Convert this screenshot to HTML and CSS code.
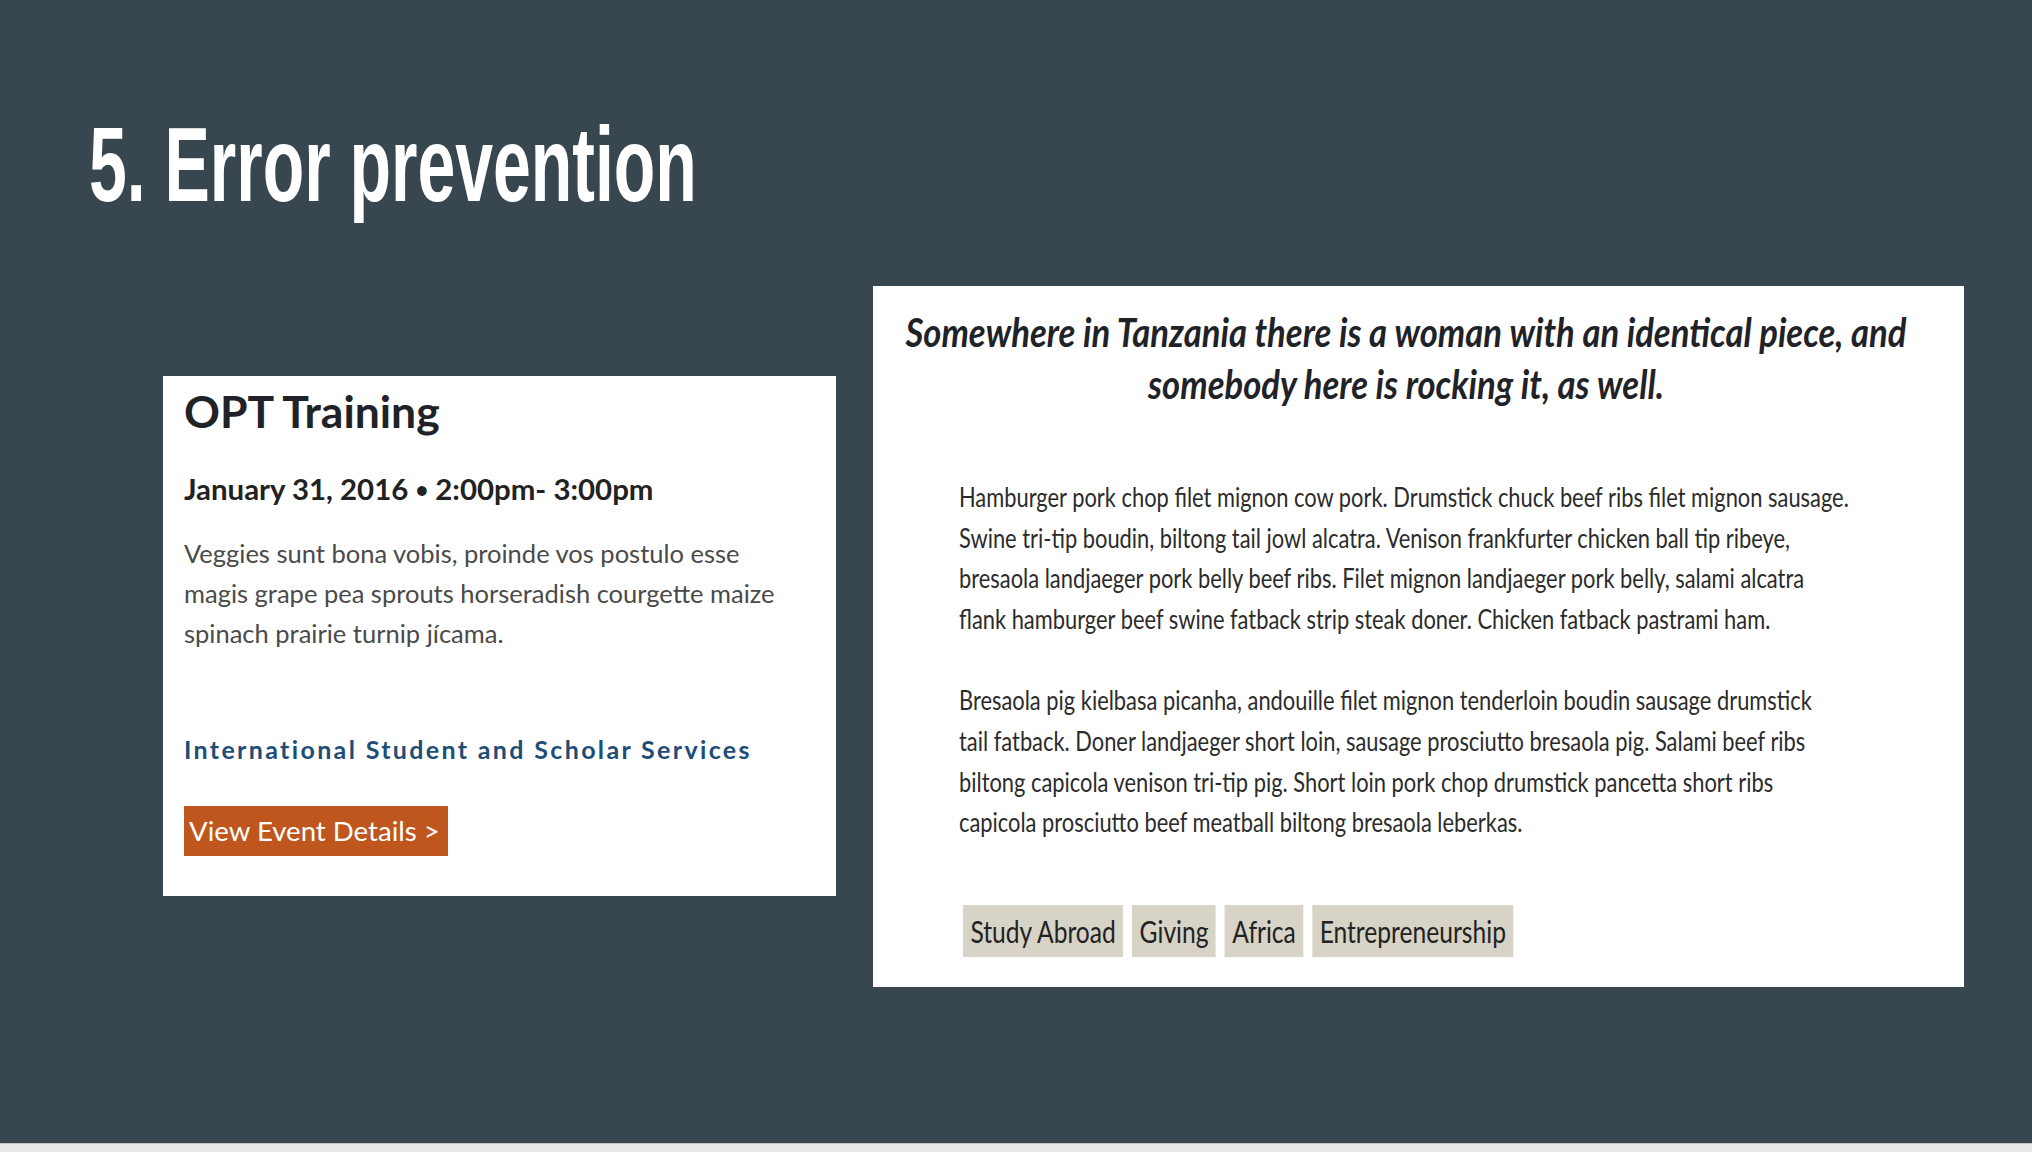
FILE: index.html
```html
<!DOCTYPE html>
<html lang="en">
<head>
<meta charset="utf-8">
<title>5. Error prevention</title>
<link rel="stylesheet" href="styles.css">
</head>
<body>
<div class="slide">
  <h1 class="slide-title"><span class="slide-title-text">5. Error prevention</span></h1>
  <div class="cards">
    <div class="event-card">
      <h2 class="event-title">OPT Training</h2>
      <div class="event-date">January 31, 2016 <span class="event-dot">•</span> 2:00pm- 3:00pm</div>
      <p class="event-desc">Veggies sunt bona vobis, proinde vos postulo esse<br>magis grape pea sprouts horseradish courgette maize<br>spinach prairie turnip jícama.</p>
      <div class="event-org">International Student and Scholar Services</div>
      <a class="event-btn">View Event Details &gt;</a>
    </div>
    <div class="story-card">
      <p class="story-quote">Somewhere in Tanzania there is a woman with an identical piece, and<br>somebody here is rocking it, as well.</p>
      <p class="story-text">Hamburger pork chop filet mignon cow pork. Drumstick chuck beef ribs filet mignon sausage.<br>Swine tri-tip boudin, biltong tail jowl alcatra. Venison frankfurter chicken ball tip ribeye,<br>bresaola landjaeger pork belly beef ribs. Filet mignon landjaeger pork belly, salami alcatra<br>flank hamburger beef swine fatback strip steak doner. Chicken fatback pastrami ham.</p>
      <p class="story-text story-text-2">Bresaola pig kielbasa picanha, andouille filet mignon tenderloin boudin sausage drumstick<br>tail fatback. Doner landjaeger short loin, sausage prosciutto bresaola pig. Salami beef ribs<br>biltong capicola venison tri-tip pig. Short loin pork chop drumstick pancetta short ribs<br>capicola prosciutto beef meatball biltong bresaola leberkas.</p>
      <div class="tags">
        <span class="tag">Study Abroad</span>
        <span class="tag">Giving</span>
        <span class="tag">Africa</span>
        <span class="tag">Entrepreneurship</span>
      </div>
    </div>
  </div>
</div>
<div class="bottom-strip"></div>
</body>
</html>
```

FILE: styles.css
```css
html, body {
  margin: 0;
  padding: 0;
  background: #e8e8e8;
}
.slide {
  height: 1143px;
  background: #384650;
  box-sizing: border-box;
  padding-top: 105px;
  overflow: hidden;
}
.slide-title {
  margin: 0 0 0 89px;
  font-family: "Liberation Sans", sans-serif;
  font-weight: 700;
  font-size: 105px;
  line-height: 120px;
  color: #ffffff;
  white-space: nowrap;
}
.slide-title-text {
  display: inline-block;
  transform: scaleX(0.647);
  transform-origin: left center;
}
.cards {
  display: flex;
  align-items: flex-start;
  gap: 37px;
  margin-left: 163px;
  margin-top: 61px;
}
.event-card {
  background: #ffffff;
  width: 673px;
  height: 520px;
  box-sizing: border-box;
  margin-top: 90px;
  padding: 10px 0 0 21px;
  font-family: "Lato", "Liberation Sans", sans-serif;
  display: flex;
  flex-direction: column;
  align-items: flex-start;
}
.event-title {
  margin: 0;
  font-size: 44.5px;
  line-height: 50px;
  font-weight: 700;
  color: #1f2328;
}
.event-date {
  margin-top: 36px;
  font-size: 29.4px;
  line-height: 34px;
  font-weight: 700;
  color: #222;
}
.event-dot {
  font-size: 22px;
  vertical-align: 2px;
}
.event-desc {
  margin: 26px 0 0 0;
  font-size: 25.5px;
  line-height: 40px;
  color: #4a4a4a;
}
.event-org {
  margin-top: 81px;
  font-size: 25px;
  line-height: 30px;
  font-weight: 700;
  letter-spacing: 2.35px;
  color: #1e4d78;
}
.event-btn {
  margin-top: 42px;
  width: 264px;
  height: 50px;
  box-sizing: border-box;
  background: #bf561d;
  color: #ffffff;
  font-size: 27.6px;
  line-height: 50px;
  padding-left: 5px;
  white-space: nowrap;
}
.story-card {
  background: #ffffff;
  width: 1091px;
  height: 701px;
  box-sizing: border-box;
  padding: 20px 0 0 0;
  font-family: "Lato", "Liberation Sans", sans-serif;
}
.story-quote {
  width: 1300px;
  margin: 0 0 0 -117px;
  text-align: center;
  font-style: italic;
  font-weight: 700;
  font-size: 40px;
  line-height: 52px;
  color: #1f2328;
  white-space: nowrap;
  transform: scaleX(0.865);
  transform-origin: center top;
}
.story-text {
  margin: 67px 0 0 86px;
  font-size: 26px;
  line-height: 40.6px;
  color: #2b2b2b;
  white-space: nowrap;
  transform: scaleX(0.841);
  transform-origin: left top;
}
.story-text-2 {
  margin-top: 41px;
}
.tags {
  display: flex;
  gap: 11px;
  margin: 62px 0 0 90px;
  transform: scaleX(0.82);
  transform-origin: left top;
}
.tag {
  background: #d7d3c6;
  height: 52px;
  line-height: 52px;
  padding: 0 9px;
  font-size: 30px;
  color: #222;
}
.bottom-strip {
  height: 9px;
  border-top: 1px solid #c6c6c6;
  background: #e8e8e8;
}
```
